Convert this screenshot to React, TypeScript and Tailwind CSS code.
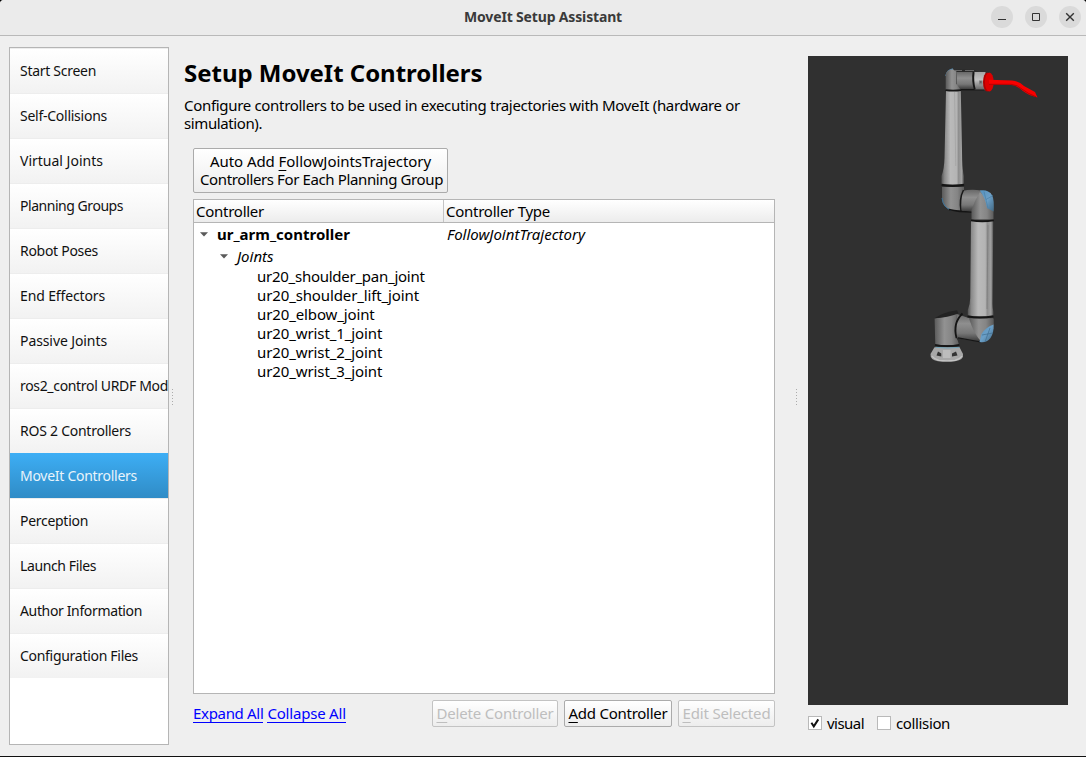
import React from "react";

type Label = { text: string; tracking: string };

const steps: Label[] = [
  { text: "Start Screen", tracking: "tracking-[-0.285px]" },
  { text: "Self-Collisions", tracking: "tracking-[-0.255px]" },
  { text: "Virtual Joints", tracking: "tracking-[0px]" },
  { text: "Planning Groups", tracking: "tracking-[-0.459px]" },
  { text: "Robot Poses", tracking: "tracking-[-0.291px]" },
  { text: "End Effectors", tracking: "tracking-[-0.133px]" },
  { text: "Passive Joints", tracking: "tracking-[-0.094px]" },
  { text: "ros2_control URDF Mod", tracking: "tracking-[-0.33px]" },
  { text: "ROS 2 Controllers", tracking: "tracking-[-0.248px]" },
  { text: "MoveIt Controllers", tracking: "tracking-[-0.274px]" },
  { text: "Perception", tracking: "tracking-[-0.288px]" },
  { text: "Launch Files", tracking: "tracking-[-0.383px]" },
  { text: "Author Information", tracking: "tracking-[-0.355px]" },
  { text: "Configuration Files", tracking: "tracking-[-0.291px]" },
];
const activeStep = "MoveIt Controllers";

const joints: Label[] = [
  { text: "ur20_shoulder_pan_joint", tracking: "tracking-[-0.26px]" },
  { text: "ur20_shoulder_lift_joint", tracking: "tracking-[-0.124px]" },
  { text: "ur20_elbow_joint", tracking: "tracking-[-0.12px]" },
  { text: "ur20_wrist_1_joint", tracking: "tracking-[-0.1px]" },
  { text: "ur20_wrist_2_joint", tracking: "tracking-[-0.1px]" },
  { text: "ur20_wrist_3_joint", tracking: "tracking-[-0.1px]" },
];

function TitleBar() {
  const round = "flex size-[22px] items-center justify-center rounded-full bg-[#dadada]";
  return (
    <header className="flex h-9 shrink-0 items-center border-b border-[#b9b9b9] bg-[#ebebeb] pr-[5px]">
      <div className="w-[95px]" />
      <h1 className="flex-1 pb-[2px] text-center text-[14px] font-bold tracking-[-0.16px] text-[#3a3a3a]">
        MoveIt Setup Assistant
      </h1>
      <div className="flex w-[90px] gap-3 pb-px">
        <button className={round} aria-label="Minimize">
          <svg width="22" height="22" viewBox="0 0 22 22"><path d="M7 13.5h8" stroke="#333" /></svg>
        </button>
        <button className={round} aria-label="Maximize">
          <svg width="22" height="22" viewBox="0 0 22 22"><path d="M7.5 7.5h7v7h-7z" fill="none" stroke="#333" /></svg>
        </button>
        <button className={round} aria-label="Close">
          <svg width="22" height="22" viewBox="0 0 22 22"><path d="m7.2 7.2 7.6 7.6m0-7.6-7.6 7.6" stroke="#333" strokeWidth="1.4" /></svg>
        </button>
      </div>
    </header>
  );
}

function Splitter() {
  return (
    <div className="flex flex-col gap-px">
      {[0, 1, 2, 3, 4, 5].map((i) => (
        <span key={i} className="mb-px size-px bg-[#acacac]" />
      ))}
    </div>
  );
}

function PushButton({ text, tracking, width, disabled }: Label & { width: string; disabled?: boolean }) {
  return (
    <button
      disabled={disabled}
      className={`h-[27px] rounded-[2px] border bg-linear-to-b from-white to-[#ededed] pb-[2px] text-center whitespace-nowrap ${width} ${tracking} ${
        disabled ? "border-[#c3c3c3] text-[#bebebe]" : "border-[#ababab] text-black"
      }`}
    >
      <span className="underline decoration-1 underline-offset-[3px]">{text[0]}</span>
      {text.slice(1)}
    </button>
  );
}

function Arrow() {
  return (
    <svg width="10" height="5" viewBox="0 0 10 5" className="shrink-0">
      <path d="M1 .3h8L5 4.4z" fill="#5a5a5a" />
    </svg>
  );
}

function Check({ text, tracking, checked }: Label & { checked?: boolean }) {
  return (
    <label className="flex items-center gap-[5px]">
      <span className="flex size-[14px] items-center justify-center border border-[#b9b9b9] bg-white">
        {checked && (
          <svg width="12" height="12" viewBox="0 0 12 12">
            <path d="M2.4 5.8 4.8 9.400 9.300 2.400" fill="none" stroke="#111" strokeWidth="2" />
          </svg>
        )}
      </span>
      <span className={tracking}>{text}</span>
    </label>
  );
}

function RobotView() {
  return (
    <svg width="260" height="649" viewBox="808 56 260 649" className="block bg-[#303030]">
      <defs>
        <linearGradient id="tube">
          <stop offset="0" stopColor="#555" />
          <stop offset=".14" stopColor="#8a8a8a" />
          <stop offset=".4" stopColor="#bababa" />
          <stop offset=".68" stopColor="#b4b4b4" />
          <stop offset=".76" stopColor="#8e8e8e" />
          <stop offset=".9" stopColor="#a2a2a2" />
          <stop offset="1" stopColor="#4c4c4c" />
        </linearGradient>
        <linearGradient id="joint">
          <stop offset="0" stopColor="#5b5b5b" />
          <stop offset=".4" stopColor="#929292" />
          <stop offset=".7" stopColor="#858585" />
          <stop offset="1" stopColor="#5c5c5c" />
        </linearGradient>
        <linearGradient id="side" x2="0" y2="1">
          <stop offset="0" stopColor="#686868" />
          <stop offset=".35" stopColor="#8f8f8f" />
          <stop offset=".7" stopColor="#777" />
          <stop offset="1" stopColor="#3a3a3a" />
        </linearGradient>
        <linearGradient id="flange" x2="0" y2="1">
          <stop offset="0" stopColor="#a5a5a5" />
          <stop offset=".45" stopColor="#c2c2c2" />
          <stop offset="1" stopColor="#666" />
        </linearGradient>
        <linearGradient id="cap" x2="1" y2="1">
          <stop offset="0" stopColor="#5592bf" />
          <stop offset=".5" stopColor="#6b9fc7" />
          <stop offset="1" stopColor="#426984" />
        </linearGradient>
      </defs>

      {/* wrist */}
      <path d="M946 76Q947 70 953 69" fill="none" stroke="#4e87ae" strokeWidth="1.5" />
      <path d="M954 70.5Q958 69 963 69.500L975 70 980 72.500V74H956z" fill="#2a2a2a" />
      <path d="M955 70.500h7m3 0h9" stroke="#777" strokeWidth=".8" />
      <path d="M957 72h18v17.300h-18z" fill="url(#side)" />
      <path d="M957 89.700h27" stroke="#161616" strokeWidth="1.400" />
      <path d="M945.700 90V75Q946.500 69.500 953 69.300L957 72 956.500 84 961 90z" fill="url(#joint)" />
      <path d="M956.500 72v12" stroke="#555" strokeWidth=".7" />
      <path d="M974.500 72h11v17.500h-11z" fill="url(#flange)" />
      <path d="M979 80.500h3.500v4h-3.500z" fill="#808080" />
      <path d="M980 82h1.500" stroke="#444" />
      <path d="M973.500 72q-1.200 9 1.300 17.500" fill="none" stroke="#161616" strokeWidth="1.900" />

      {/* tool */}
      <ellipse cx="987.2" cy="82" rx="4.200" ry="9.600" fill="#b00000" />
      <ellipse cx="989.300" cy="82" rx="4.400" ry="9.400" fill="#dc0000" />
      <path d="M989 79.700 1012 80.500Q1019 81 1024 86L1035 92 1037.500 97.500Q1029 95.500 1023 91 1017 85.200 1011 85L989 84.600z" fill="#f80000" />
      <path d="M989 84.300h22q6 .2 12 5.500 5 4 13 7" fill="none" stroke="#a80000" strokeWidth=".8" />

      {/* forearm */}
      <path d="M946 91h14.800l1.400 69q.3 10 1.700 16v8.500h-22.400V176q2.700-7 3-18z" fill="url(#tube)" />
      <path d="M954.500 92l1.300 74" stroke="#999" strokeWidth=".5" />
      <path d="M945.500 90.200q7.500 1 15.500 0" fill="none" stroke="#161616" strokeWidth="1.800" />

      {/* elbow */}
      <path d="M942 187h22v23.500h-12Q942 207 942 199z" fill="url(#joint)" />
      <path d="M942 198q1.500 10 9 12" fill="none" stroke="#3b739b" strokeWidth="1" />
      <path d="M949 209.500Q959 212 972 212" fill="none" stroke="#141414" strokeWidth="1.600" />
      <path d="M962 191Q971 189 981 190.500L991 193V209L972 211.500 962 210.800z" fill="url(#side)" />
      <path d="M971.500 210Q975 200 980 192L993.500 207V219.500H971.500z" fill="url(#joint)" />
      <path d="M963.500 190q-4.600 9-2.500 21" fill="none" stroke="#181818" strokeWidth="1.500" />
      <path d="M979.800 190.500Q988 189 992 195 994.500 200 993.600 211.500L987 208Q985.500 198 979.800 190.500z" fill="url(#cap)" />
      <path d="M984 191.500l4 17m-2-9 7-4" stroke="#4b7fa6" strokeWidth=".7" />
      <path d="M941.500 184.800q11 2.200 22.600 0" fill="none" stroke="#141414" strokeWidth="2" />

      {/* upper arm */}
      <path d="M971 221h22.300l-.8 83q0 4 1 8v4.500h-25.700V310q2.400-6 2.400-12z" fill="url(#tube)" />
      <path d="M988 225l-1 84" stroke="#777" strokeWidth=".6" />
      <path d="M971 220.300q11 2 22.800 0" fill="none" stroke="#141414" strokeWidth="1.800" />

      {/* shoulder */}
      <path d="M934.600 318.500 957 313.500 956 337.500Q958 340 959 345H935.300z" fill="url(#joint)" />
      <path d="M934.500 318.300Q943 312 957 310.200L958.500 313.500Q948 317.500 934.500 318.300z" fill="#222" />
      <path d="M957 314 970 318.500H993.300V329L982 341.500Q967 341 956 337.500z" fill="url(#side)" />
      <path d="M969 318.500h24.300V327L981 341.500Q974 334 969 318.500z" fill="url(#joint)" />
      <path d="M958 337.800 981 342" stroke="#161616" strokeWidth="1.200" />
      <path d="M962.500 313.500Q952.500 323 956.500 338" fill="none" stroke="#141414" strokeWidth="1.800" />
      <path d="M993.500 324.500Q986 327 981.500 334L979.500 342Q986 343.500 990.500 338 994 333 993.500 324.500z" fill="url(#cap)" />
      <path d="M982 335l11-2m-8 9 5-14" stroke="#406f91" strokeWidth=".7" />
      <path d="M967.500 316.200q12 2.800 26 0" fill="none" stroke="#141414" strokeWidth="2" />

      {/* base */}
      <path d="M934.500 347.300H959.500L963 354Q964 360 955 361.200 946 362 938 361.200 930 360 930.500 354z" fill="#a8a8a8" />
      <path d="M932 356q2 3 7 4.300 8 1 16 0 5-1.300 7-4.300" fill="none" stroke="#c4c4c4" strokeWidth="1.200" />
      <path d="M936.500 355.500 938 351.500 941.300 353.500V356.500zM957.500 355.500 956 351.500 952 353.500V356.500z" fill="#333" />
      <path d="M943 350h7.500v8h-7.500z" fill="#bdbdbd" />
      <path d="M935.500 347.300q12 1.500 24 0" fill="none" stroke="#75a5b9" strokeWidth="1" />
      <path d="M935 344.800q12 2.500 24.300 0" fill="none" stroke="#161616" strokeWidth="1.800" />
    </svg>
  );
}

export default function App() {
  return (
    <div className="bg-black">
      <div className="flex h-[757px] w-[1086px] flex-col overflow-hidden rounded-t-[4px] border-b border-[#111] bg-[#efefef] font-['Noto_Sans','Open_Sans',sans-serif] text-[15px] leading-[18px] text-black">
        <TitleBar />
        <main className="flex min-h-0 flex-1">
          <nav className="mt-[11px] ml-[9px] h-[698px] w-40 shrink-0 overflow-hidden border border-[#b5b5b5] bg-white text-[14px]">
            {steps.map((s) => (
              <div
                key={s.text}
                className={`flex h-[45px] items-center overflow-hidden bg-linear-to-b pl-[10px] whitespace-nowrap ${s.tracking} ${
                  s.text === activeStep
                    ? "from-[#3daef5] to-[#308cc6] pt-px text-[#e9f4fb]"
                    : "border-t border-[#ededed] from-white to-[#f2f2f2] text-[#111]"
                }`}
              >
                {s.text}
              </div>
            ))}
          </nav>

          <div className="flex w-[15px] shrink-0 justify-start pt-[353px] pl-[3px]"><Splitter /></div>

          <section className="flex w-[591px] shrink-0 flex-col">
            <h2 className="mt-[21px] text-[24px] leading-[32px] font-bold tracking-[-0.03px]">Setup MoveIt Controllers</h2>
            <p className="mt-[7px] whitespace-nowrap">
              <span className="block tracking-[-0.313px]">Configure controllers to be used in executing trajectories with MoveIt (hardware or</span>
              <span className="block tracking-[-0.399px]">simulation).</span>
            </p>
            <div className="flex flex-col pl-[9px]">
              <button className="mt-4 h-[45px] w-[255px] rounded-[2px] border border-[#ababab] bg-linear-to-b from-white to-[#ededed] pb-[2px] whitespace-nowrap">
                <span className="block tracking-[-0.065px]">
                  Auto Add <span className="underline decoration-1 underline-offset-[3px]">F</span>ollowJointsTrajectory
                </span>
                <span className="block pl-[2px] tracking-[-0.381px]">Controllers For Each Planning Group</span>
              </button>

              <div className="mt-[6px] flex h-[495px] flex-col border border-[#b5b5b5] bg-white">
                <div className="flex h-[23px] shrink-0 items-center border-b border-[#b5b5b5] bg-linear-to-b from-white to-[#ececec]">
                  <span className="flex h-full w-[250px] items-center border-r border-[#c4c4c4] pb-px pl-[2px] tracking-[-0.261px]">Controller</span>
                  <span className="pb-px pl-[2px] tracking-[-0.259px]">Controller Type</span>
                </div>
                <div className="flex h-[23px] items-center pb-px pl-[5px]">
                  <Arrow />
                  <span className="w-[238px] pl-[8px] font-bold">ur_arm_controller</span>
                  <span className="italic">FollowJointTrajectory</span>
                </div>
                <div className="mb-px flex h-5 items-center pl-[25px]">
                  <Arrow />
                  <span className="pl-[8px] italic">Joints</span>
                </div>
                {joints.map((j) => (
                  <div key={j.text} className={`h-[19px] pl-[63px] leading-[19px] ${j.tracking}`}>{j.text}</div>
                ))}
              </div>

              <div className="mt-[6px] flex items-center">
                <a className="mr-[4px] border-b border-[#0000ff] leading-[17px] tracking-[-0.32px] text-[#0000ff]">Expand All</a>
                <a className="border-b border-[#0000ff] leading-[17px] tracking-[-0.2px] text-[#0000ff]">Collapse All</a>
                <div className="ml-auto flex gap-[6px]">
                  <PushButton text="Delete Controller" tracking="tracking-[-0.184px]" width="w-[126px]" disabled />
                  <PushButton text="Add Controller" tracking="tracking-[-0.253px]" width="w-[108px]" />
                  <PushButton text="Edit Selected" tracking="tracking-[-0.16px]" width="w-[97px]" disabled />
                </div>
              </div>
            </div>
          </section>

          <div className="flex w-[33px] shrink-0 pt-[353px] pl-[21px]"><Splitter /></div>

          <aside className="flex flex-col pt-5">
            <RobotView />
            <div className="mt-[9px] flex gap-[13px]">
              <Check text="visual" tracking="tracking-[-0.538px]" checked />
              <Check text="collision" tracking="tracking-[-0.365px]" />
            </div>
          </aside>
        </main>
      </div>
    </div>
  );
}
